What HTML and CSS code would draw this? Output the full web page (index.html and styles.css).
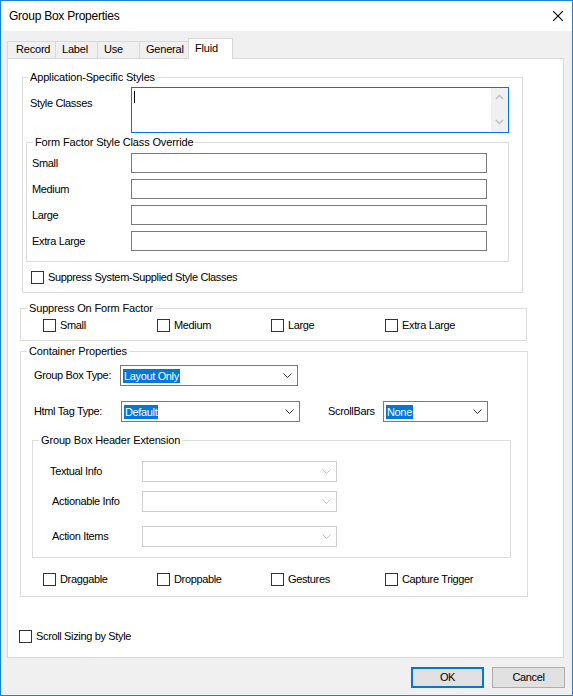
FILE: index.html
```html
<!DOCTYPE html>
<html>
<head>
<meta charset="utf-8">
<title>Group Box Properties</title>
<link rel="stylesheet" href="styles.css">
</head>
<body>
<div class="window">
  <div class="titlebar">
    <span class="title">Group Box Properties</span>
    <svg class="close" width="10" height="10" viewBox="0 0 10 10"><path d="M0 0 L10 10 M10 0 L0 10" stroke="#000" stroke-width="1.1" fill="none"/></svg>
  </div>
  <div class="client">
    <div class="tabs">
      <div class="tab tab-record">Record</div>
      <div class="tab tab-label">Label</div>
      <div class="tab tab-use">Use</div>
      <div class="tab tab-general">General</div>
      <div class="tab tab-fluid selected">Fluid</div>
    </div>
    <div class="panel">
      <fieldset class="group g-app">
        <legend>Application-Specific Styles</legend>
        <div class="row-style">
          <span class="lbl lbl-style">Style Classes</span>
          <div class="textarea">
            <span class="caret"></span>
            <div class="vscroll">
              <svg width="9" height="6" viewBox="0 0 9 6"><path d="M1 5 L4.5 1.5 L8 5" fill="none" stroke="#c2c2c2" stroke-width="1.6"/></svg>
              <svg width="9" height="6" viewBox="0 0 9 6"><path d="M1 1 L4.5 4.5 L8 1" fill="none" stroke="#c2c2c2" stroke-width="1.6"/></svg>
            </div>
          </div>
        </div>
        <fieldset class="group g-ff">
          <legend>Form Factor Style Class Override</legend>
          <div class="ff-body">
            <div class="ff-row"><span class="lbl lbl-ff">Small</span><div class="input"></div></div>
            <div class="ff-row"><span class="lbl lbl-ff">Medium</span><div class="input"></div></div>
            <div class="ff-row"><span class="lbl lbl-ff">Large</span><div class="input"></div></div>
            <div class="ff-row"><span class="lbl lbl-ff">Extra Large</span><div class="input"></div></div>
          </div>
        </fieldset>
        <div class="check check-suppress"><span class="box"></span><span>Suppress System-Supplied Style Classes</span></div>
      </fieldset>

      <fieldset class="group g-sup">
        <legend>Suppress On Form Factor</legend>
        <div class="check-row sup-row">
          <div class="check check-item"><span class="box"></span><span>Small</span></div>
          <div class="check check-item"><span class="box"></span><span>Medium</span></div>
          <div class="check check-item"><span class="box"></span><span>Large</span></div>
          <div class="check check-item"><span class="box"></span><span>Extra Large</span></div>
        </div>
      </fieldset>

      <fieldset class="group g-con">
        <legend>Container Properties</legend>
        <div class="con-row con-row1">
          <span class="lbl lbl-gbt">Group Box Type:</span>
          <div class="combo combo-gbt"><span class="sel">Layout Only</span>
            <svg class="chev" width="9" height="5" viewBox="0 0 9 5"><path d="M0.5 0.5 L4.5 4.5 L8.5 0.5" fill="none" stroke="#333"/></svg></div>
        </div>
        <div class="con-row con-row2">
          <span class="lbl lbl-html">Html Tag Type:</span>
          <div class="combo combo-html"><span class="sel">Default</span>
            <svg class="chev" width="9" height="5" viewBox="0 0 9 5"><path d="M0.5 0.5 L4.5 4.5 L8.5 0.5" fill="none" stroke="#333"/></svg></div>
          <span class="lbl lbl-sb">ScrollBars</span>
          <div class="combo combo-sb"><span class="sel">None</span>
            <svg class="chev" width="9" height="5" viewBox="0 0 9 5"><path d="M0.5 0.5 L4.5 4.5 L8.5 0.5" fill="none" stroke="#333"/></svg></div>
        </div>

        <fieldset class="group g-ext">
          <legend>Group Box Header Extension</legend>
          <div class="ext-row ext-row1">
            <span class="lbl lbl-ext1">Textual Info</span>
            <div class="combo combo-ext disabled">
              <svg class="chev" width="9" height="5" viewBox="0 0 9 5"><path d="M0.5 0.5 L4.5 4.5 L8.5 0.5" fill="none" stroke="#c4c4c4"/></svg></div>
          </div>
          <div class="ext-row ext-row2">
            <span class="lbl lbl-ext">Actionable Info</span>
            <div class="combo combo-ext disabled">
              <svg class="chev" width="9" height="5" viewBox="0 0 9 5"><path d="M0.5 0.5 L4.5 4.5 L8.5 0.5" fill="none" stroke="#c4c4c4"/></svg></div>
          </div>
          <div class="ext-row ext-row3">
            <span class="lbl lbl-ext">Action Items</span>
            <div class="combo combo-ext disabled">
              <svg class="chev" width="9" height="5" viewBox="0 0 9 5"><path d="M0.5 0.5 L4.5 4.5 L8.5 0.5" fill="none" stroke="#c4c4c4"/></svg></div>
          </div>
        </fieldset>

        <div class="check-row con-checks">
          <div class="check check-item"><span class="box"></span><span>Draggable</span></div>
          <div class="check check-item"><span class="box"></span><span>Droppable</span></div>
          <div class="check check-item"><span class="box"></span><span>Gestures</span></div>
          <div class="check check-item"><span class="box"></span><span>Capture Trigger</span></div>
        </div>
      </fieldset>

      <div class="check check-scroll"><span class="box"></span><span>Scroll Sizing by Style</span></div>
    </div>
    <div class="buttons">
      <div class="btn btn-default">OK</div>
      <div class="btn">Cancel</div>
    </div>
  </div>
</div>
</body>
</html>
```

FILE: styles.css
```css
* { box-sizing: border-box; }
html, body { margin: 0; padding: 0; }
body {
  width: 573px;
  height: 696px;
  font-family: "Liberation Sans", Arial, sans-serif;
  font-size: 11px;
  line-height: 13px;
  letter-spacing: -0.35px;
  color: #000;
  background: #f0f0f0;
}
.window {
  width: 573px;
  height: 696px;
  border: 1px solid #1883d7;
  display: flex;
  flex-direction: column;
  background: #f0f0f0;
}
.titlebar {
  height: 30px;
  flex: none;
  background: #fff;
  display: flex;
  align-items: center;
  padding-left: 8px;
}
.title {
  font-size: 12px;
  line-height: 16px;
  letter-spacing: -0.25px;
  flex: 1;
}
.close {
  margin-right: 9px;
  margin-top: -1px;
}
.client {
  flex: 1;
  display: flex;
  flex-direction: column;
}
.tabs {
  height: 20px;
  margin-top: 7px;
  padding-left: 6px;
  display: flex;
  align-items: flex-end;
}
.tab {
  height: 17px;
  border: 1px solid #d9d9d9;
  border-bottom: none;
  line-height: 15px;
  padding-left: 6px;
  background: #f0f0f0;
  white-space: nowrap;
  margin-left: -1px;
  letter-spacing: -0.2px;
}
.tab-record { width: 49px; margin-left: 0; padding-left: 8px; }
.tab-label { width: 43px; }
.tab-use { width: 43px; }
.tab-general { width: 52px; }
.tab.selected {
  width: 45px;
  height: 21px;
  margin-left: -3px;
  margin-bottom: -1px;
  line-height: 18px;
  background: #fff;
  position: relative;
  z-index: 1;
}
.panel {
  height: 600px;
  margin: 0 8px 0 6px;
  border: 1px solid #d9d9d9;
  background: #fff;
  flex: none;
}
fieldset.group {
  margin: 0;
  padding: 0;
  border: 1px solid #dcdcdc;
  min-width: 0;
}
fieldset.group > legend {
  padding: 0 2px;
  margin-left: 6px;
  line-height: 13px;
  font-size: 11px;
  letter-spacing: -0.15px;
}
.g-app { margin: 12px 0 0 14px !important; width: 501px; }
.g-app > legend { margin-left: 5px !important; }
.row-style {
  display: flex;
  padding-left: 7px;
  margin-top: 3px;
}
.lbl { white-space: nowrap; flex: none; }
.lbl-style { width: 101px; margin-top: 10px; }
.textarea {
  width: 378px;
  height: 46px;
  border: 1px solid #0078d7;
  background: #fff;
  display: flex;
  justify-content: space-between;
}
.caret {
  width: 1px;
  height: 12px;
  background: #000;
  margin: 3px 0 0 2px;
}
.vscroll {
  width: 17px;
  background: #f0f0f0;
  display: flex;
  flex-direction: column;
  align-items: center;
  justify-content: space-between;
  padding: 6px 0 7px;
}
.g-ff { margin: 3px 0 0 3px !important; width: 483px; }
.ff-body { padding: 4px 0 10px 5px; }
.ff-row {
  display: flex;
  align-items: center;
  height: 20px;
  margin-top: 6px;
}
.ff-row:first-child { margin-top: 0; }
.lbl-ff { width: 99px; }
.input {
  width: 356px;
  height: 20px;
  border: 1px solid #7a7a7a;
  background: #fff;
}
.check {
  display: flex;
  align-items: center;
  height: 13px;
  white-space: nowrap;
}
.box {
  width: 13px;
  height: 13px;
  border: 1px solid #333;
  background: #fff;
  margin-right: 4px;
  flex: none;
}
.check-suppress { margin: 9px 0 8px 8px; }
.g-sup { margin: 9px 0 0 12px !important; width: 507px; }
.check-row { display: flex; }
.check-item { width: 114px; }
.sup-row { padding: 4px 0 8px 22px; }
.g-con { margin: 4px 0 0 12px !important; width: 508px; }
.con-row {
  display: flex;
  align-items: center;
  padding-left: 13px;
}
.con-row1 { margin-top: 7px; }
.con-row2 { margin-top: 15px; }
.lbl-gbt { width: 86px; }
.lbl-html { width: 87px; }
.lbl-sb { width: 55px; margin-left: 28px; }
.combo {
  height: 21px;
  border: 1px solid #7a7a7a;
  background: #fff;
  display: flex;
  align-items: center;
  padding-left: 2px;
}
.combo .chev { margin-left: auto; margin-right: 5px; flex: none; }
.combo.disabled { border-color: #cccccc; }
.combo-gbt { width: 178px; }
.combo-html { width: 179px; }
.combo-sb { width: 105px; }
.sel {
  background: #0078d7;
  color: #fff;
  line-height: 14px;
  padding: 0 1px;
}
.g-ext { margin: 12px 0 0 11px !important; width: 479px; }
.ext-row {
  display: flex;
  align-items: center;
}
.ext-row1 { margin-top: 14px; padding-left: 17px; }
.ext-row2 { margin-top: 9px; padding-left: 19px; }
.ext-row3 { margin-top: 14px; padding-left: 19px; margin-bottom: 10px; }
.lbl-ext1 { width: 92px; }
.lbl-ext { width: 90px; }
.combo-ext { width: 195px; }
.con-checks { padding: 0 0 10px 22px; margin-top: 15px; }
.check-scroll { margin: 33px 0 0 11px; }
.buttons {
  display: flex;
  justify-content: flex-end;
  margin-top: 9px;
  padding-right: 7px;
}
.btn {
  width: 73px;
  height: 21px;
  border: 1px solid #adadad;
  background: #e1e1e1;
  display: flex;
  align-items: center;
  justify-content: center;
  margin-left: 8px;
}
.btn-default { border: 2px solid #0078d7; }
```
